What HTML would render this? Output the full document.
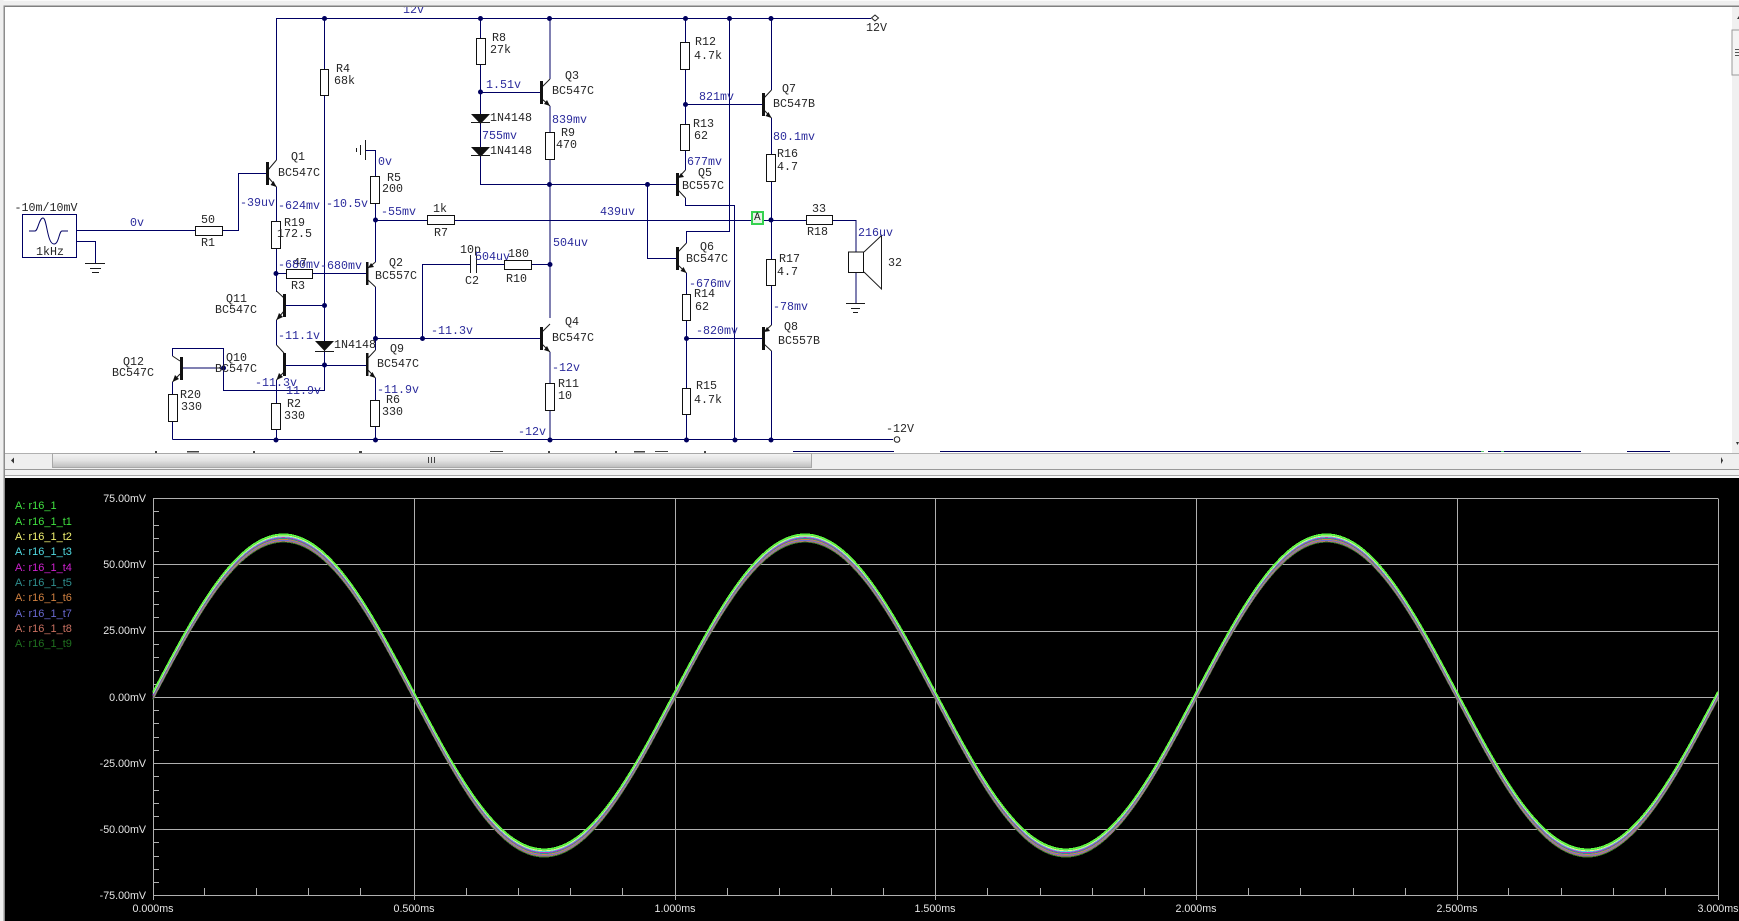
<!DOCTYPE html>
<html><head><meta charset="utf-8"><title>Circuit simulation</title>
<style>
html,body{margin:0;padding:0;background:#efefef;overflow:hidden}
svg{display:block;position:absolute;left:0;top:0}
text{dominant-baseline:central;white-space:pre}
.k,.b{font-family:"Liberation Mono",monospace;font-size:11.67px}
.k{fill:#262626}
.b{fill:#2b2b9c}
.p{font-family:"Liberation Sans",sans-serif;font-size:10.7px;fill:#e6e6e6}
.l{font-family:"Liberation Sans",sans-serif;font-size:11px}
.w{fill:none;stroke:#000064;stroke-width:1}
.t{fill:none;stroke:#1a1a1a;stroke-width:1}
.r{fill:#fff;stroke:#111;stroke-width:1}
.g{fill:none;stroke:#b0b0b0;stroke-width:1;shape-rendering:crispEdges}
.s{fill:none;stroke-width:1.15;shape-rendering:crispEdges}
</style></head>
<body>
<svg width="1739" height="921" viewBox="0 0 1739 921" xmlns="http://www.w3.org/2000/svg">
<defs>
<linearGradient id="h" x1="0" y1="0" x2="0" y2="1"><stop offset="0" stop-color="#f4f4f4"/><stop offset=".5" stop-color="#e2e2e2"/><stop offset="1" stop-color="#bdbdbd"/></linearGradient>
<path id="sine" d="M153 0c42.5 -81 83.2 -157.5 130.4 -157.5s87.9 77 130.4 157.5s83.2 157.5 130.4 157.5s87.9 -77 130.4 -157.5s83.2 -157.5 130.4 -157.5s87.9 77 130.4 157.5s83.2 157.5 130.4 157.5s87.9 -77 130.4 -157.5s83.2 -157.5 130.4 -157.5s87.9 77 130.4 157.5s83.2 157.5 130.4 157.5s87.9 -77 130.4 -157.5"/>
</defs>
<rect width="1739" height="921" fill="#efefef"/>
<rect x="5" y="7" width="1727" height="446" fill="#fff"/>

<!-- wires -->
<path class="w" d="M276.500 160V18.500H865M324.500 18.500V69M324.500 95V390.500H223.500V368M172.500 356V348.500H223.500V368H182
M76 230.500H195M222 230.500H238.500V173.500H267M76 241.500H95.500V263
M276.500 187V221M276.500 248V292M276.500 273.500H287M313 273.500H366M286 305.500H324.500
M276.500 320V345M276.500 380V403M276.500 429V440M286 365.500H366
M172.500 382V394M172.500 421V439.500M172.500 439.500H888
M365.500 150.500H375.500V177M375.500 203V262M375.500 287V350M375.500 378V400M375.500 426V440
M375.500 220.500H427M454 220.500H806M833 220.500H856V252M856 272V303
M375.500 338.500H540M422.500 338.500V264.500H470M476 264.500H504M531 264.500H550
M550 18.500V79M550 106V133M550 159V318M550 352V384M550 410V440
M480.500 18.500V38M480.500 64V184.500H676M480.500 92.500H541
M647.500 184.500V258.500H676
M685.500 18.500V42M685.500 69V125M685.500 150V170M685.500 198V205.500H734.500V440M685.500 104.500H762
M729.500 18.500V231.500H686.500V243M686.500 273V295M686.500 320V389M686.500 414V440M686.500 338.500H762
M771.500 18.500V90M771.500 118V155M771.500 181V260M771.500 285V325M771.500 351V440"/>
<path class="w" d="M865 18.500H871M888 439.500H893"/>

<!-- transistor leads -->
<path class="t" d="M268 170L276.500 160M268 177L276.500 187
M284 298L276.500 291M284 311L276.500 320M284 353L276.500 345M284 372L276.500 380
M180 361L172.500 356M180 374L172.500 382
M368 268L375.500 262M368 280L375.500 287M368 358L375.500 350M368 370L375.500 378
M542 87L550 79M542 99L550 106M542 332L550 324M542 344L550 352
M678 178L685.500 170M678 190L685.500 198M678 252L686.500 243M678 265L686.500 273
M764 98L771.500 90M764 110L771.500 118M764 332L771.500 325M764 344L771.500 351"/>
<g fill="#111">
<rect x="266" y="162" width="3" height="23"/>
<rect x="283" y="294" width="3" height="23"/>
<rect x="283" y="353" width="3" height="23"/>
<rect x="180" y="357" width="3" height="23"/>
<rect x="366" y="262" width="2.500" height="23"/>
<rect x="366" y="353" width="2.500" height="23"/>
<rect x="540" y="81" width="3" height="23"/>
<rect x="540" y="327" width="3" height="23"/>
<rect x="676" y="173" width="3" height="23"/>
<rect x="676" y="247" width="3" height="23"/>
<rect x="762" y="93" width="3" height="23"/>
<rect x="762" y="327" width="3" height="23"/>
<!-- arrows -->
<path d="M276.500 187l-6-2 3-4zM276.500 320l2.500-7 4 4zM276.500 380l2.500-7 4 4zM172.500 382l2.500-7 4 4zM375.500 378l-6-2 3-4zM368 268l6-1-3-4zM550 106l-6-2 3-4zM550 352l-6-2 3-4zM678 178l6-1-3-4zM686.500 273l-6-2 3-4zM771.500 118l-6-2 3-4zM764 332l6-1-3-4z"/>
<!-- diodes -->
<path d="M315 341h19l-9.500 10zM471 114h19l-9.500 10zM471 147h19l-9.500 10z"/>
</g>
<path class="t" d="M315 351.500H334M471 122.500H490M471 155.500H490"/>

<!-- resistors -->
<rect class="r" x="195.500" y="226.500" width="27" height="9"/>
<rect class="r" x="271.500" y="221.500" width="9" height="27"/>
<rect class="r" x="320.500" y="69.500" width="8" height="26"/>
<rect class="r" x="370.500" y="176.500" width="9" height="27"/>
<rect class="r" x="427.500" y="215.500" width="27" height="9"/>
<rect class="r" x="286.500" y="269.500" width="26" height="9"/>
<rect class="r" x="168.500" y="394.500" width="9" height="27"/>
<rect class="r" x="271.500" y="403.500" width="9" height="26"/>
<rect class="r" x="370.500" y="400.500" width="9" height="26"/>
<rect class="r" x="504.500" y="260.500" width="27" height="9"/>
<rect class="r" x="476.500" y="38.500" width="9" height="26"/>
<rect class="r" x="545.500" y="132.500" width="9" height="27"/>
<rect class="r" x="545.500" y="383.500" width="9" height="27"/>
<rect class="r" x="680.500" y="42.500" width="9" height="27"/>
<rect class="r" x="680.500" y="124.500" width="9" height="26"/>
<rect class="r" x="682.500" y="294.500" width="8" height="26"/>
<rect class="r" x="682.500" y="388.500" width="8" height="26"/>
<rect class="r" x="766.500" y="154.500" width="9" height="27"/>
<rect class="r" x="766.500" y="259.500" width="9" height="26"/>
<rect class="r" x="806.500" y="215.500" width="26" height="9"/>

<!-- capacitor -->
<path class="t" d="M470.500 255V273M476.500 255V273"/>

<!-- source -->
<rect x="22.500" y="214.500" width="54" height="43" fill="#fff" stroke="#000064"/>
<path fill="none" stroke="#000064" d="M29 231H35C38 231 39 218 43 218C47 218 47 244 54 244C59 244 59 231 62 231H68"/>
<!-- grounds -->
<path class="t" d="M85 263.500H105M90 268.500H101M92 272.500H99M846 303.500H865M851 308.500H860M853 312.500H858M365.500 140V160M360.500 145V155M356.500 148V152"/>
<!-- speaker -->
<rect x="848.500" y="252" width="15" height="20.500" fill="#fff" stroke="#111"/>
<path class="t" d="M864 252L881.500 235.500V289L864 272"/>
<!-- terminals -->
<path fill="#fff" stroke="#222" d="M875 15l3.500 3-3.500 3-3.500-3z"/>
<circle cx="897" cy="439.500" r="2.800" fill="#fff" stroke="#222"/>

<!-- junctions -->
<g fill="#00005e">
<circle cx="324.500" cy="18.500" r="2.500"/><circle cx="480.500" cy="18.500" r="2.500"/><circle cx="549.500" cy="18.500" r="2.500"/><circle cx="685.500" cy="18.500" r="2.500"/><circle cx="729.500" cy="18.500" r="2.500"/><circle cx="771" cy="18.500" r="2.500"/>
<circle cx="480.500" cy="92" r="2.500"/><circle cx="685.500" cy="104.500" r="2.500"/>
<circle cx="549.500" cy="184.500" r="2.500"/><circle cx="647.500" cy="184.500" r="2.500"/>
<circle cx="375.500" cy="220" r="2.500"/><circle cx="771" cy="220" r="2.500"/>
<circle cx="550" cy="264.500" r="2.500"/><circle cx="276" cy="273.500" r="2.500"/>
<circle cx="324.500" cy="305.500" r="2.500"/><circle cx="375.500" cy="338.500" r="2.500"/><circle cx="422.500" cy="338.500" r="2.500"/><circle cx="686.500" cy="338.500" r="2.500"/>
<circle cx="324.500" cy="365" r="2.500"/><circle cx="223.500" cy="368" r="2.500"/>
<circle cx="276" cy="440" r="2.500"/><circle cx="375.500" cy="440" r="2.500"/><circle cx="550" cy="440" r="2.500"/><circle cx="686.500" cy="440" r="2.500"/><circle cx="735" cy="440" r="2.500"/><circle cx="771" cy="440" r="2.500"/>
</g>

<!-- marker A -->
<rect x="752" y="212" width="11" height="12" fill="#e8f5e8" stroke="#35d24f" stroke-width="2"/>
<text class="k" x="754" y="218" style="font-size:11px">A</text>

<!-- black labels -->
<g class="k" transform="translate(0 1)">
<text x="291" y="156">Q1</text><text x="278" y="172">BC547C</text>
<text x="284" y="222">R19</text><text x="277" y="233">172.5</text>
<text x="336" y="68">R4</text><text x="334" y="80">68k</text>
<text x="387" y="177">R5</text><text x="382" y="188">200</text>
<text x="433" y="208">1k</text><text x="434" y="232">R7</text>
<text x="201" y="219">50</text><text x="201" y="242">R1</text>
<text x="14.500" y="207">-10m/10mV</text><text x="36" y="251">1kHz</text>
<text x="293" y="262">47</text><text x="291" y="285">R3</text>
<text x="389" y="262">Q2</text><text x="375" y="275">BC557C</text>
<text x="226" y="298">Q11</text><text x="215" y="309">BC547C</text>
<text x="226" y="357">Q10</text><text x="215" y="368">BC547C</text>
<text x="123" y="361">Q12</text><text x="112" y="372">BC547C</text>
<text x="180" y="394">R20</text><text x="181" y="406">330</text>
<text x="287" y="403">R2</text><text x="284" y="415">330</text>
<text x="386" y="399">R6</text><text x="382" y="411">330</text>
<text x="390" y="348">Q9</text><text x="377" y="363">BC547C</text>
<text x="334" y="344">1N4148</text>
<text x="460" y="249">10p</text><text x="465" y="280">C2</text>
<text x="508" y="253">180</text><text x="506" y="278">R10</text>
<text x="492" y="37">R8</text><text x="490" y="49">27k</text>
<text x="565" y="75">Q3</text><text x="552" y="90">BC547C</text>
<text x="490" y="117">1N4148</text><text x="490" y="150">1N4148</text>
<text x="561" y="132">R9</text><text x="556" y="144">470</text>
<text x="695" y="41">R12</text><text x="694" y="55">4.7k</text>
<text x="693" y="123">R13</text><text x="694" y="135">62</text>
<text x="698" y="172">Q5</text><text x="682" y="185">BC557C</text>
<text x="782" y="88">Q7</text><text x="773" y="103">BC547B</text>
<text x="777" y="153">R16</text><text x="777" y="166">4.7</text>
<text x="812" y="208">33</text><text x="807" y="231">R18</text>
<text x="700" y="246">Q6</text><text x="686" y="258">BC547C</text>
<text x="694" y="293">R14</text><text x="695" y="306">62</text>
<text x="779" y="258">R17</text><text x="777" y="271">4.7</text>
<text x="565" y="321">Q4</text><text x="552" y="337">BC547C</text>
<text x="558" y="383">R11</text><text x="558" y="395">10</text>
<text x="696" y="385">R15</text><text x="694" y="399">4.7k</text>
<text x="784" y="326">Q8</text><text x="778" y="340">BC557B</text>
<text x="888" y="262">32</text>
<text x="886" y="428">-12V</text><text x="866" y="27">12V</text>
</g>

<!-- voltage labels -->
<g class="b" transform="translate(0 1)">
<text x="403" y="9">12v</text>
<text x="378" y="161">0v</text>
<text x="240" y="202">-39uv</text>
<text x="278" y="205">-624mv</text>
<text x="326" y="203">-10.5v</text>
<text x="381" y="211">-55mv</text>
<text x="130" y="222">0v</text>
<text x="278" y="264">-680mv</text>
<text x="320" y="265">-680mv</text>
<text x="278" y="335">-11.1v</text>
<text x="431" y="330">-11.3v</text>
<text x="255" y="382">-11.3v</text>
<text x="286" y="390">11.9v</text>
<text x="377" y="389">-11.9v</text>
<text x="475" y="256">504uv</text>
<text x="553" y="242">504uv</text>
<text x="486" y="84">1.51v</text>
<text x="552" y="119">839mv</text>
<text x="482" y="135">755mv</text>
<text x="699" y="96">821mv</text>
<text x="687" y="161">677mv</text>
<text x="600" y="211">439uv</text>
<text x="773" y="136">80.1mv</text>
<text x="858" y="232">216uv</text>
<text x="689" y="283">-676mv</text>
<text x="773" y="306">-78mv</text>
<text x="696" y="330">-820mv</text>
<text x="552" y="367">-12v</text>
<text x="518" y="431">-12v</text>
</g>

<!-- clipped items at the bottom of the schematic -->
<g fill="#444">
<rect x="155" y="451" width="2" height="2"/><rect x="187" y="451" width="12" height="1.500"/><rect x="253" y="451" width="2" height="2"/><rect x="359" y="451" width="3" height="2"/><rect x="490" y="451" width="13" height="1"/><rect x="548" y="451" width="2" height="2"/><rect x="615" y="451" width="2" height="2"/><rect x="634" y="451" width="11" height="1.500"/><rect x="655" y="451" width="13" height="1"/><rect x="704" y="451" width="2" height="2"/>
</g>
<g fill="#00005e">
<rect x="793" y="451" width="101" height="1"/><rect x="940" y="451" width="541" height="1"/><rect x="1488" y="451" width="93" height="1"/><rect x="1627" y="451" width="43" height="1"/>
</g>
<rect x="1481" y="451" width="3" height="1" fill="#5fd070"/><rect x="1501" y="451" width="3" height="1" fill="#5fd070"/>

<!-- frame overlays -->
<rect x="0" y="0" width="1739" height="5.500" fill="#efefef"/>
<rect x="0" y="0" width="1739" height="1" fill="#fafafa"/>
<rect x="0" y="5.500" width="1739" height="1.500" fill="#808080"/>
<rect x="0" y="0" width="3.500" height="921" fill="#efefef"/>
<rect x="3.500" y="6" width="1.500" height="915" fill="#8c8c8c"/>

<!-- right scrollbar -->
<rect x="1732" y="7" width="7" height="446" fill="#f0f0f0"/>
<path d="M1737 19l2-3v3z" fill="#333"/>
<rect x="1732" y="30" width="8" height="45" fill="#f4f4f4" stroke="#9a9a9a"/>
<path d="M1735 49.500h4M1735 52.500h4M1735 55.500h4" stroke="#555" fill="none"/>
<path d="M1736 442h3l-1.500 3z" fill="#333"/>

<!-- horizontal scrollbar -->
<rect x="5" y="453" width="1734" height="16" fill="#efefef"/>
<rect x="5" y="453" width="1734" height="1" fill="#b0b0b0"/>
<rect x="52.500" y="453.500" width="759" height="14" fill="url(#h)" stroke="#a8a8a8"/>
<path d="M428.500 457v6M431.500 457v6M434.500 457v6" stroke="#444" fill="none"/>
<path d="M11 460.500l3-3v6z" fill="#333"/>
<path d="M1721 457v7l2-3.500z" fill="#333"/>
<rect x="5" y="469" width="1734" height="1" fill="#999"/>
<rect x="5" y="470" width="1734" height="5" fill="#f2f2f2"/>
<rect x="5" y="475" width="1734" height="1" fill="#aaa"/>
<rect x="5" y="476" width="1734" height="2" fill="#fafafa"/>

<!-- plot -->
<rect x="5" y="478" width="1734" height="443" fill="#000"/>
<path class="g" d="M153.500 498.500V900M414.500 498.500V900M675.500 498.500V900M935.500 498.500V900M1196.500 498.500V900M1457.500 498.500V900M1718.500 498.500V900
M153 498.500H1718M153 564.500H1718M153 631.500H1718M153 697.500H1718M153 763.500H1718M153 829.500H1718M153 895.500H1718"/>
<path class="g" d="M153 511.500h6M153 525.500h6M153 538.500h6M153 551.500h6M153 577.500h6M153 591.500h6M153 604.500h6M153 617.500h6M153 644.500h6M153 657.500h6M153 670.500h6M153 684.500h6M153 710.500h6M153 723.500h6M153 737.500h6M153 750.500h6M153 776.500h6M153 790.500h6M153 803.500h6M153 816.500h6M153 842.500h6M153 856.500h6M153 869.500h6M153 882.500h6"/>
<path class="g" d="M204.500 888v7M256.500 888v7M308.500 888v7M360.500 888v7M466.500 888v7M518.500 888v7M570.500 888v7M622.500 888v7M727.500 888v7M779.500 888v7M831.500 888v7M883.500 888v7M987.500 888v7M1040.500 888v7M1092.500 888v7M1144.500 888v7M1248.500 888v7M1300.500 888v7M1353.500 888v7M1405.500 888v7M1508.500 888v7M1561.500 888v7M1613.500 888v7M1665.500 888v7"/>

<!-- traces -->
<use href="#sine" class="s" stroke="#2f7a2f" y="699.500"/>
<use href="#sine" class="s" stroke="#b87868" y="698.600"/>
<use href="#sine" class="s" stroke="#7070d8" y="697.700"/>
<use href="#sine" class="s" stroke="#d08848" y="696.800"/>
<use href="#sine" class="s" stroke="#2f8f8f" y="695.900"/>
<use href="#sine" class="s" stroke="#c030c0" y="695"/>
<use href="#sine" class="s" stroke="#50d8e8" y="694.100"/>
<use href="#sine" class="s" stroke="#f0f080" y="693.200"/>
<use href="#sine" class="s" stroke="#50e050" y="692.300"/>
<use href="#sine" class="s" stroke="#60ff40" y="691.500"/>

<!-- legend -->
<g class="l" transform="translate(0 1)">
<text x="15" y="505" fill="#40e040">A: r16_1</text>
<text x="15" y="521" fill="#40e040">A: r16_1_t1</text>
<text x="15" y="536" fill="#f0f070">A: r16_1_t2</text>
<text x="15" y="551" fill="#50d8e0">A: r16_1_t3</text>
<text x="15" y="567" fill="#d020d0">A: r16_1_t4</text>
<text x="15" y="582" fill="#2f8f8f">A: r16_1_t5</text>
<text x="15" y="597" fill="#d08040">A: r16_1_t6</text>
<text x="15" y="613" fill="#6868d0">A: r16_1_t7</text>
<text x="15" y="628" fill="#c87060">A: r16_1_t8</text>
<text x="15" y="643" fill="#1f701f">A: r16_1_t9</text>
</g>
<g class="p" text-anchor="end" transform="translate(0 1)">
<text x="146" y="498">75.00mV</text>
<text x="146" y="564">50.00mV</text>
<text x="146" y="630">25.00mV</text>
<text x="146" y="697">0.00mV</text>
<text x="146" y="763">-25.00mV</text>
<text x="146" y="829">-50.00mV</text>
<text x="146" y="895">-75.00mV</text>
</g>
<g class="p" text-anchor="middle" transform="translate(0 1)">
<text x="153" y="908">0.000ms</text>
<text x="414" y="908">0.500ms</text>
<text x="675" y="908">1.000ms</text>
<text x="935" y="908">1.500ms</text>
<text x="1196" y="908">2.000ms</text>
<text x="1457" y="908">2.500ms</text>
<text x="1718" y="908">3.000ms</text>
</g>
</svg>
</body></html>
